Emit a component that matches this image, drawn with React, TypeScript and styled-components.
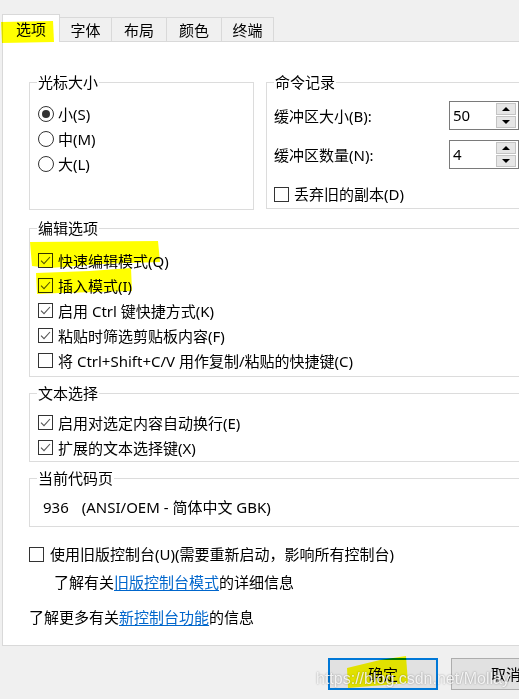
import React from 'react'
import styled, { createGlobalStyle } from 'styled-components'

const GlobalStyle = createGlobalStyle`
  html, body {
    margin: 0;
    padding: 0;
    background: #f0f0f0;
  }
  body {
    font-family: "Noto Sans", "Noto Sans CJK SC", "Microsoft YaHei", sans-serif;
    font-size: 15px;
    line-height: 20px;
    color: #000000;
  }
`

const Window = styled.div`
  position: relative;
  width: 519px;
  height: 699px;
  overflow: hidden;
  background: #f0f0f0;
`
const TabStrip = styled.div`
  display: flex;
  align-items: flex-end;
  height: 41px;
  padding-left: 2px;
  box-sizing: border-box;
`
const Tab = styled.div<{ $active?: boolean; $w: number }>`
  position: relative;
  z-index: ${p => (p.$active ? 2 : 1)};
  box-sizing: border-box;
  display: flex;
  align-items: center;
  justify-content: center;
  width: ${p => p.$w}px;
  height: ${p => (p.$active ? 28 : 24)}px;
  margin-bottom: ${p => (p.$active ? -1 : 0)}px;
  margin-left: ${p => (p.$active ? 0 : -1)}px;
  padding-top: ${p => (p.$active ? 0 : 1)}px;
  border: 1px solid #d9d9d9;
  border-bottom: none;
  background: ${p => (p.$active ? '#ffffff' : '#f0f0f0')};
`
const Panel = styled.div`
  box-sizing: border-box;
  width: 540px;
  height: 605px;
  margin-left: 2px;
  padding: 40px 16px 0 26px;
  background: #ffffff;
  border: 1px solid #d9d9d9;
`
const TopRow = styled.div`
  display: flex;
  gap: 12px;
`
const GroupBox = styled.div<{ $w?: number; $h: number; $pt: number; $pl?: number; $mt?: number }>`
  position: relative;
  box-sizing: border-box;
  ${p => (p.$w ? `width: ${p.$w}px;` : 'flex: 1;')}
  height: ${p => p.$h}px;
  margin-top: ${p => p.$mt ?? 0}px;
  padding: ${p => p.$pt}px 0 0 ${p => p.$pl ?? 8}px;
  border: 1px solid #dcdcdc;
`
const Legend = styled.span`
  position: absolute;
  top: -11px;
  left: 7px;
  padding: 0 1px;
  background: #ffffff;
  white-space: nowrap;
`
const OptionRow = styled.label<{ $h?: number; $gap?: number; $mt?: number }>`
  display: flex;
  align-items: center;
  gap: ${p => p.$gap ?? 5}px;
  height: ${p => p.$h ?? 25}px;
  margin-top: ${p => p.$mt ?? 0}px;
  white-space: nowrap;
`
const RadioCircle = styled.span<{ $on?: boolean }>`
  box-sizing: border-box;
  display: flex;
  align-items: center;
  justify-content: center;
  width: 16px;
  height: 16px;
  border: 1px solid #333333;
  border-radius: 50%;
  &::after {
    content: '';
    display: ${p => (p.$on ? 'block' : 'none')};
    width: 8px;
    height: 8px;
    border-radius: 50%;
    background: #333333;
  }
`
const CheckBoxBox = styled.span`
  box-sizing: border-box;
  display: flex;
  align-items: center;
  justify-content: center;
  flex: none;
  width: 15px;
  height: 15px;
  border: 1px solid #333333;
  background: #ffffff;
`
const SpinRow = styled.div<{ $mt?: number }>`
  display: flex;
  align-items: center;
  height: 29px;
  margin-top: ${p => p.$mt ?? 0}px;
`
const SpinLabel = styled.span`
  width: 175px;
  white-space: nowrap;
`
const SpinBox = styled.div`
  box-sizing: border-box;
  display: flex;
  width: 70px;
  height: 29px;
  border: 1px solid #7a7a7a;
  background: #ffffff;
`
const SpinValue = styled.span`
  flex: 1;
  padding-left: 3px;
  line-height: 26px;
`
const SpinButtons = styled.div`
  display: flex;
  flex-direction: column;
  gap: 1px;
  width: 20px;
  padding: 1px 2px 1px 0;
`
const SpinButton = styled.span<{ $up?: boolean }>`
  flex: 1;
  display: flex;
  align-items: center;
  justify-content: center;
  box-sizing: border-box;
  border: 1px solid #c4c4c4;
  background: #e6e6e6;
  &::after {
    content: '';
    width: 0;
    height: 0;
    border-left: 4px solid transparent;
    border-right: 4px solid transparent;
    ${p => (p.$up ? 'border-bottom: 4px solid #000;' : 'border-top: 4px solid #000;')}
  }
`
const CodeLine = styled.div`
  display: flex;
  gap: 13px;
  height: 20px;
  white-space: nowrap;
`
const Line = styled.div<{ $mt: number; $pl?: number }>`
  height: 20px;
  margin-top: ${p => p.$mt}px;
  padding-left: ${p => p.$pl ?? 0}px;
  white-space: nowrap;
`
const Link = styled.a`
  color: #0066cc;
  text-decoration: underline;
  text-underline-offset: 2px;
`
const ButtonBar = styled.div`
  display: flex;
  gap: 13px;
  padding: 12px 0 0 328px;
`
const DialogButton = styled.div<{ $default?: boolean }>`
  box-sizing: border-box;
  flex: none;
  display: flex;
  align-items: center;
  justify-content: center;
  width: 110px;
  height: 32px;
  background: #e1e1e1;
  border: ${p => (p.$default ? '2px solid #0078d7' : '1px solid #adadad')};
`
const Marker = styled.svg`
  position: absolute;
  z-index: 3;
  top: 0;
  left: 0;
  pointer-events: none;
  mix-blend-mode: multiply;
`
const Watermark = styled.div`
  position: absolute;
  z-index: 4;
  left: 316px;
  top: 669px;
  font-family: "Liberation Sans", Arial, sans-serif;
  font-size: 16px;
  line-height: 20px;
  color: rgba(255, 255, 255, 0.85);
  text-shadow: 0 0 2px rgba(0, 0, 0, 0.4);
  white-space: nowrap;
  pointer-events: none;
`

const CheckMark = () => (
  <svg width="13" height="13" viewBox="0 0 13 13">
    <path d="M2 6.6 L5 9.6 L11 3" fill="none" stroke="#555555" strokeWidth="1.1" />
  </svg>
)

const Check = ({ on, children, gap }: { on?: boolean; children: React.ReactNode; gap?: number }) => (
  <OptionRow $gap={gap}>
    <CheckBoxBox>{on && <CheckMark />}</CheckBoxBox>
    <span>{children}</span>
  </OptionRow>
)

const Spin = ({ value }: { value: string }) => (
  <SpinBox>
    <SpinValue>{value}</SpinValue>
    <SpinButtons>
      <SpinButton $up />
      <SpinButton />
    </SpinButtons>
  </SpinBox>
)

const tabs = [
  { name: '选项', w: 58 },
  { name: '字体', w: 53 },
  { name: '布局', w: 56 },
  { name: '颜色', w: 56 },
  { name: '终端', w: 53 },
]

const editOptions = [
  { text: '快速编辑模式(Q)', on: true },
  { text: '插入模式(I)', on: true },
  { text: '启用 Ctrl 键快捷方式(K)', on: true },
  { text: '粘贴时筛选剪贴板内容(F)', on: true },
  { text: '将 Ctrl+Shift+C/V 用作复制/粘贴的快捷键(C)', on: false },
]

const App = () => (
  <Window>
    <GlobalStyle />
    <TabStrip>
      {tabs.map((tab, index) =>
        <Tab key={`tab_${index}`} $active={index === 0} $w={tab.w}>{tab.name}</Tab>
      )}
    </TabStrip>
    <Panel>
      <TopRow>
        <GroupBox $w={225} $h={128} $pt={18}>
          <Legend>光标大小</Legend>
          <OptionRow $gap={4}><RadioCircle $on /><span>小(S)</span></OptionRow>
          <OptionRow $gap={4}><RadioCircle /><span>中(M)</span></OptionRow>
          <OptionRow $gap={4}><RadioCircle /><span>大(L)</span></OptionRow>
        </GroupBox>
        <GroupBox $h={127} $pt={18} $pl={7}>
          <Legend>命令记录</Legend>
          <SpinRow>
            <SpinLabel>缓冲区大小(B):</SpinLabel>
            <Spin value="50" />
          </SpinRow>
          <SpinRow $mt={10}>
            <SpinLabel>缓冲区数量(N):</SpinLabel>
            <Spin value="4" />
          </SpinRow>
          <OptionRow $h={20} $mt={15}>
            <CheckBoxBox />
            <span>丢弃旧的副本(D)</span>
          </OptionRow>
        </GroupBox>
      </TopRow>

      <GroupBox $h={149} $pt={19} $mt={18}>
        <Legend>编辑选项</Legend>
        {editOptions.map((opt, index) =>
          <Check key={`edit_${index}`} on={opt.on}>{opt.text}</Check>
        )}
      </GroupBox>

      <GroupBox $h={69} $pt={16} $mt={16}>
        <Legend>文本选择</Legend>
        <Check on>启用对选定内容自动换行(E)</Check>
        <Check on>扩展的文本选择键(X)</Check>
      </GroupBox>

      <GroupBox $h={49} $pt={18} $pl={13} $mt={16}>
        <Legend>当前代码页</Legend>
        <CodeLine>
          <span>936</span>
          <span>(ANSI/OEM - 简体中文 GBK)</span>
        </CodeLine>
      </GroupBox>

      <OptionRow $h={20} $gap={6} $mt={17}>
        <CheckBoxBox />
        <span>使用旧版控制台(U)(需要重新启动，影响所有控制台)</span>
      </OptionRow>
      <Line $mt={8} $pl={25}>
        了解有关<Link>旧版控制台模式</Link>的详细信息
      </Line>
      <Line $mt={15}>
        了解更多有关<Link>新控制台功能</Link>的信息
      </Line>
    </Panel>

    <ButtonBar>
      <DialogButton $default>确定</DialogButton>
      <DialogButton>取消</DialogButton>
    </ButtonBar>

    <Marker width="519" height="699" viewBox="0 0 519 699">
      <g fill="#ffff00">
        <polygon points="1,22 53,21 54,42 2,43" />
        <polygon points="30,242 158,241 160,262 100,264 50,268 32,266" />
        <polygon points="36,273 90,271 131,268 132,291 60,293 37,294" />
        <polygon points="347,668 380,660 406,656 408,683 372,686 348,688" />
      </g>
    </Marker>
    <Watermark>https://blog.csdn.net/Mollay</Watermark>
  </Window>
)

export default App
